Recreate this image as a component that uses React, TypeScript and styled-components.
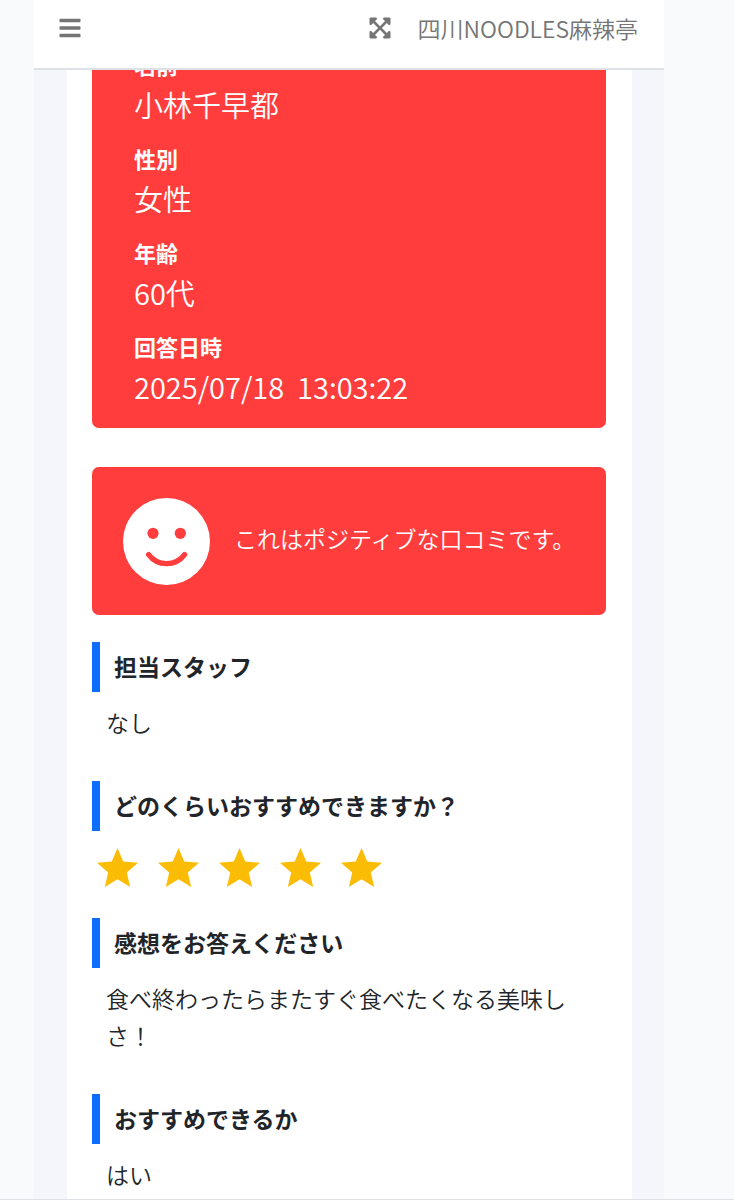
import React from "react";
import styled, { createGlobalStyle } from "styled-components";
import { FaBars, FaExpandArrowsAlt } from "react-icons/fa";

const GlobalStyle = createGlobalStyle`
  *, *::before, *::after { box-sizing: border-box; }
  body {
    margin: 0;
    background: #f9fafc;
    color: #212529;
    font-family: "Noto Sans CJK JP", "Noto Sans", sans-serif;
    font-size: 23px;
    font-weight: 350;
    line-height: 37px;
  }
  h2, p, dl, dt, dd { margin: 0; }
`;

const Page = styled.div`
  display: flex;
  flex-direction: column;
  min-height: 100vh;
`;

const Shell = styled.div`
  flex: 1;
  margin: 0 70px 0 34px;
  background: #f4f6fb;
`;

const Navbar = styled.header`
  position: sticky;
  top: 0;
  z-index: 1;
  display: flex;
  align-items: center;
  justify-content: space-between;
  height: 70px;
  padding: 0 26px 12px 24px;
  background: #fff;
  border-bottom: 2px solid #dee2e6;
  color: #757575;
`;

const NavGroup = styled.div`
  display: flex;
  align-items: center;
  gap: 25px;
`;

const IconButton = styled.button`
  display: flex;
  padding: 0;
  border: 0;
  background: none;
  color: inherit;
  font-size: 24px;
  cursor: pointer;
`;

const ShopLink = styled.a`
  color: inherit;
  text-decoration: none;
  white-space: nowrap;
`;

/* The review is scrolled so that its top lies under the sticky bar. */
const Review = styled.main`
  margin: -46px 32px 0 33px;
  padding: 0 26px 4px 25px;
  background: #fff;
`;

const Card = styled.section`
  border-radius: 7px;
  background: #ff3d3d;
  color: #fff;
`;

const ProfileCard = styled(Card)`
  padding: 23px 42px 19px;
`;

const Profile = styled.dl`
  display: grid;
  gap: 14px;
`;

const Label = styled.dt`
  font-size: 22px;
  font-weight: 700;
  line-height: 34px;
`;

const Value = styled.dd`
  font-size: 29px;
  line-height: 46px;
  white-space: pre-wrap;
`;

const MoodCard = styled(Card)`
  display: flex;
  align-items: center;
  gap: 24px;
  margin: 39px 0 27px;
  padding: 31px 0 30px 31px;
`;

const MoodText = styled.p`
  padding-bottom: 6px;
`;

const Face = styled.svg`
  flex: none;
  width: 87px;
  height: 87px;
`;

const Question = styled.section`
  & + & { margin-top: 38px; }
`;

const Heading = styled.h2`
  padding: 0 0 2px 14px;
  border-left: 8px solid #0d6efd;
  font-size: 23px;
  font-weight: 700;
  line-height: 48px;
`;

const Answer = styled.p`
  padding: 12px 14px 2px;
`;

const Stars = styled.div`
  display: flex;
  gap: 20px;
  height: 49px;
  padding: 17px 5px 0;
`;

const StarShape = styled.svg`
  flex: none;
  width: 41px;
  height: 39px;
  fill: #fbbc05;
`;

const Footer = styled.footer`
  border-top: 1px solid #dee2e6;
`;

const profile = [
  ["名前", "小林千早都"],
  ["性別", "女性"],
  ["年齢", "60代"],
  ["回答日時", "2025/07/18  13:03:22"],
];

const Star = () => (
  <StarShape viewBox="2 2 20 19" aria-hidden="true">
    <path d="M12 17.27 18.18 21l-1.64-7.03L22 9.24l-7.19-.61L12 2 9.19 8.63 2 9.24l5.46 4.73L5.82 21z" />
  </StarShape>
);

const SmileFace = () => (
  <Face viewBox="0 0 87 87" aria-hidden="true">
    <circle cx="43.5" cy="43.5" r="43.5" fill="#fff" />
    <circle cx="30" cy="35.3" r="5.6" fill="#ff3d3d" />
    <circle cx="57.3" cy="35.3" r="5.6" fill="#ff3d3d" />
    <path
      d="M25.6 56.6A22.5 22.5 0 0 0 61.6 56.6"
      fill="none"
      stroke="#ff3d3d"
      strokeWidth="5.2"
      strokeLinecap="round"
    />
  </Face>
);

export default function App() {
  return (
    <Page>
      <GlobalStyle />
      <Shell>
        <Navbar>
          <IconButton type="button" aria-label="メニュー">
            <FaBars />
          </IconButton>
          <NavGroup>
            <IconButton type="button" aria-label="全画面表示">
              <FaExpandArrowsAlt />
            </IconButton>
            <ShopLink href="#">四川NOODLES麻辣亭</ShopLink>
          </NavGroup>
        </Navbar>
        <Review>
          <ProfileCard>
            <Profile>
              {profile.map(([label, value]) => (
                <div key={label}>
                  <Label>{label}</Label>
                  <Value>{value}</Value>
                </div>
              ))}
            </Profile>
          </ProfileCard>
          <MoodCard>
            <SmileFace />
            <MoodText>これはポジティブな口コミです。</MoodText>
          </MoodCard>
          <Question>
            <Heading>担当スタッフ</Heading>
            <Answer>なし</Answer>
          </Question>
          <Question>
            <Heading>どのくらいおすすめできますか？</Heading>
            <Stars role="img" aria-label="5つ星">
              {[1, 2, 3, 4, 5].map((n) => (
                <Star key={n} />
              ))}
            </Stars>
          </Question>
          <Question>
            <Heading>感想をお答えください</Heading>
            <Answer>食べ終わったらまたすぐ食べたくなる美味しさ！</Answer>
          </Question>
          <Question>
            <Heading>おすすめできるか</Heading>
            <Answer>はい</Answer>
          </Question>
        </Review>
      </Shell>
      <Footer />
    </Page>
  );
}
